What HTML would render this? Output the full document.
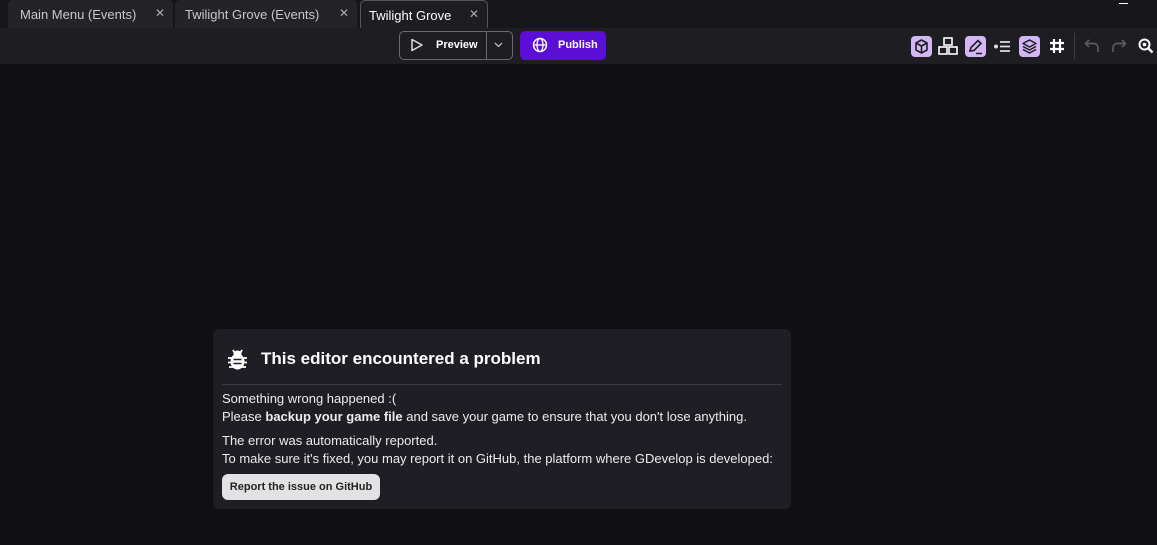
<!DOCTYPE html>
<html><head><style>
*{margin:0;padding:0;box-sizing:border-box}
body{width:1157px;height:545px;background:#111015;font-family:"Liberation Sans",sans-serif;overflow:hidden;position:relative;color:#e8e8ea}
.tabs{position:absolute;left:0;top:0;width:1157px;height:28px;background:#17171b}
.tab{position:absolute;top:0;height:28px;background:#232328;border-radius:5px 5px 0 0;font-size:13px;color:#c8c8cc;padding:7px 0 0 12px}
.tab .x{position:absolute;right:8px;top:6px;font-size:12px;color:#aaa}
.tab.active{background:#1d1d22;border:1px solid #55555c;border-bottom:none;color:#fff}
.bar{position:absolute;left:0;top:28px;width:1157px;height:36px;background:#1d1d22}
.btn{position:absolute;font-weight:bold;font-size:11px;color:#fff}
.ic{position:absolute;top:36px;width:21px;height:21px;border-radius:4px}
.card{position:absolute;left:213px;top:329px;width:578px;height:180px;background:#1f1e24;border-radius:6px}
.card p{position:absolute;left:9px;font-size:13px;color:#ececee;white-space:nowrap}
</style></head><body>
<div class="tabs">
<div class="tab" style="left:8px;width:165px">Main Menu (Events)<span class="x">✕</span></div>
<div class="tab" style="left:175px;width:182px;padding-left:10px">Twilight Grove (Events)<span class="x">✕</span></div>
<div class="tab active" style="left:360px;width:128px;padding-left:8px">Twilight Grove<span class="x">✕</span></div>
<div style="position:absolute;left:1119px;top:3px;width:9px;height:1px;background:#fff"></div>
</div>
<div class="bar"></div>
<div class="btn" style="left:399px;top:31px;width:114px;height:29px;border:1px solid #6a6a70;border-radius:5px"></div>
<div style="position:absolute;left:486px;top:32px;width:1px;height:27px;background:#6a6a70"></div>
<svg style="position:absolute;left:410px;top:38px" width="14" height="14"><path d="M2 1.5 L12 7 L2 12.5Z" fill="none" stroke="#ddd" stroke-width="1.5" stroke-linejoin="round"/></svg>
<div class="btn" style="left:436px;top:39px">Preview</div>
<svg style="position:absolute;left:494px;top:42px" width="9" height="6"><path d="M1 1 L4.5 4.5 L8 1" fill="none" stroke="#bbb" stroke-width="1.3"/></svg>
<div style="position:absolute;left:520px;top:31px;width:86px;height:29px;background:#5b0fd6;border-radius:5px"></div>
<svg style="position:absolute;left:532px;top:37px" width="16" height="16"><circle cx="8" cy="8" r="6.5" fill="none" stroke="#fff" stroke-width="1.5"/><ellipse cx="8" cy="8" rx="3" ry="6.5" fill="none" stroke="#fff" stroke-width="1.3"/><path d="M1.5 8H14.5" stroke="#fff" stroke-width="1.3"/></svg>
<div class="btn" style="left:558px;top:39px">Publish</div>
<div class="ic" style="left:911px;background:#d3b6f5"></div>
<svg style="position:absolute;left:913px;top:38px" width="17" height="17"><path d="M8.5 2 L14 5 V12 L8.5 15 L3 12 V5Z M3 5 L8.5 8 L14 5 M8.5 8 V15" fill="none" stroke="#1d1d22" stroke-width="1.6" stroke-linejoin="round"/></svg>
<svg style="position:absolute;left:937px;top:36px" width="22" height="21"><g fill="none" stroke="#fff" stroke-width="1.6"><rect x="7" y="2" width="8" height="7"/><rect x="2" y="11" width="8" height="7"/><rect x="12" y="11" width="8" height="7"/></g></svg>
<div class="ic" style="left:965px;background:#d3b6f5"></div>
<svg style="position:absolute;left:967px;top:38px" width="17" height="17"><path d="M3 13 L4 9.5 L11 2.5 L14 5.5 L7 12.5Z M9 15.5 H15" fill="none" stroke="#1d1d22" stroke-width="1.6"/></svg>
<svg style="position:absolute;left:993px;top:38px" width="20" height="17"><circle cx="3" cy="8.5" r="2" fill="#ddd"/><path d="M7 4H17M7 8.5H17M7 13H17" stroke="#ddd" stroke-width="1.8"/></svg>
<div class="ic" style="left:1019px;background:#d3b6f5"></div>
<svg style="position:absolute;left:1021px;top:38px" width="17" height="17"><path d="M8.5 2 L15 5.5 L8.5 9 L2 5.5Z M2 8.5 L8.5 12 L15 8.5 M2 11.5 L8.5 15 L15 11.5" fill="none" stroke="#1d1d22" stroke-width="1.5" stroke-linejoin="round"/></svg>
<svg style="position:absolute;left:1048px;top:37px" width="18" height="18"><path d="M6 2V16M12 2V16M2 6H16M2 12H16" stroke="#fff" stroke-width="2.2"/></svg>
<div style="position:absolute;left:1074px;top:33px;width:1px;height:26px;background:#3a3a40"></div>
<svg style="position:absolute;left:1083px;top:37px" width="18" height="18"><path d="M6 3 L2.5 6.5 L6 10 M2.5 6.5 H11 A4 4 0 0 1 15 10.5 V15" fill="none" stroke="#5a5a60" stroke-width="1.7"/></svg>
<svg style="position:absolute;left:1110px;top:37px" width="18" height="18"><path d="M12 3 L15.5 6.5 L12 10 M15.5 6.5 H7 A4 4 0 0 0 3 10.5 V15" fill="none" stroke="#5a5a60" stroke-width="1.7"/></svg>
<svg style="position:absolute;left:1137px;top:37px" width="18" height="18"><circle cx="7.5" cy="7.5" r="5" fill="none" stroke="#fff" stroke-width="2"/><circle cx="7.5" cy="7.5" r="1.8" fill="#fff"/><path d="M11 11 L15.5 15.5" stroke="#fff" stroke-width="2.4"/></svg>

<div class="card">
<svg style="position:absolute;left:14px;top:19px" width="21" height="24"><g stroke="#fff" stroke-width="1.8"><path d="M6 2 L8 5.5 M15 2 L13 5.5"/><path d="M1 10H20M1 14.5H20M2 19H19"/></g><ellipse cx="10.5" cy="13.5" rx="7" ry="8" fill="#fff"/><circle cx="10.5" cy="6.5" r="4" fill="#fff"/><path d="M6.5 11.5H14.5M6.5 15.5H14.5" stroke="#1f1e24" stroke-width="1.6"/></svg>
<div style="position:absolute;left:48px;top:20px;font-size:17px;font-weight:bold;color:#fff">This editor encountered a problem</div>
<div style="position:absolute;left:9px;top:55px;width:560px;height:1px;background:#3c3b42"></div>
<p style="top:62px">Something wrong happened :(</p>
<p style="top:80px">Please <b>backup your game file</b> and save your game to ensure that you don't lose anything.</p>
<p style="top:104px">The error was automatically reported.</p>
<p style="top:122px">To make sure it's fixed, you may report it on GitHub, the platform where GDevelop is developed:</p>
<div style="position:absolute;left:9px;top:145px;width:158px;height:26px;background:#e2e2e4;border-radius:6px;color:#222;font-size:11px;font-weight:bold;text-align:center;line-height:26px">Report the issue on GitHub</div>
</div>
</body></html>
